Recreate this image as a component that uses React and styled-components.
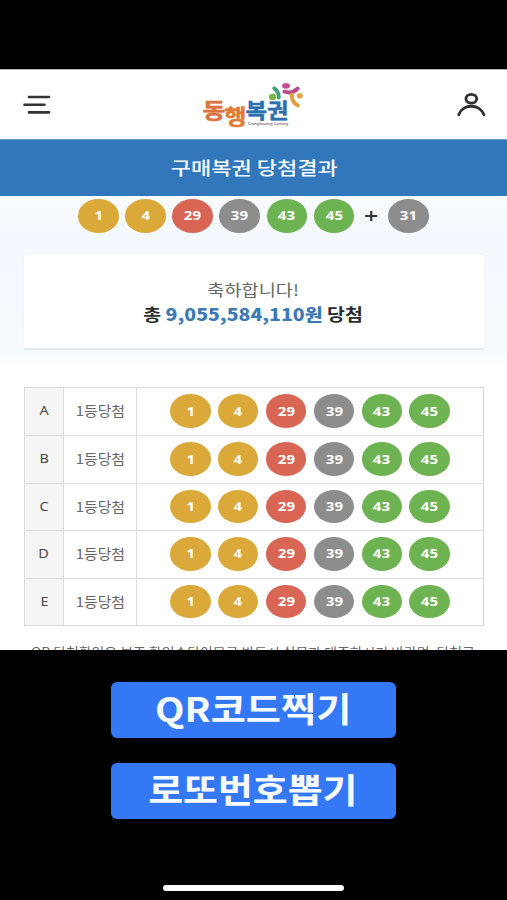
import styled, { createGlobalStyle } from 'styled-components';

const GlobalStyle = createGlobalStyle`
	* {
		box-sizing: border-box;
	}
	body {
		margin: 0;
		background: #000;
		font-family: 'Noto Sans CJK KR', 'Noto Sans', sans-serif;
	}
`;

const colors = {
	yellow: '#daa93a',
	red: '#d96555',
	gray: '#8d8d8e',
	green: '#6eb351',
};

const Screen = styled.div`
	display: flex;
	flex-direction: column;
	width: 507px;
	height: 900px;
	padding-top: 69px;
	overflow: hidden;
	background: #000;
`;

const WebPage = styled.main`
	display: flex;
	flex-direction: column;
	height: 581px;
	overflow: hidden;
	background: #fff;
`;

const Header = styled.header`
	display: flex;
	flex: none;
	justify-content: space-between;
	height: 70px;
	border-top: 1px solid #b5b5b5;
`;

/* wide lettering used everywhere on the page */
const Wide = styled.span`
	display: inline-block;
	white-space: pre;
	transform: scaleX(${(p) => p.$x || 1.2});
	transform-origin: ${(p) => p.$origin || 'center'};
`;

const TitleBar = styled.h1`
	display: flex;
	flex: none;
	align-items: center;
	justify-content: center;
	height: 57px;
	margin: 0;
	padding: 0 0 2px 1px;
	border-top: 1px solid #7399bd;
	background: #3277bc;
	color: #f4faff;
	font-size: 18.5px;
	font-weight: 500;
	line-height: 1;
`;

const Result = styled.section`
	display: flex;
	flex: none;
	flex-direction: column;
	align-items: center;
	height: 170px;
	padding-top: 3px;
	background: linear-gradient(#f8fbff, #f4f9ff 40px, #f6faff 155px, #fff);
`;

const Balls = styled.div`
	display: flex;
	align-items: center;
	justify-content: center;
	gap: ${(p) => p.$gap}px;
`;

const Circle = styled.span`
	display: flex;
	flex: none;
	align-items: center;
	justify-content: center;
	width: 40.6px;
	height: 33.6px;
	border-radius: 50%;
	background: ${(p) => colors[p.$color]};
	color: #fff;
	font-family: 'Noto Sans', sans-serif;
	font-size: 13px;
	font-weight: 700;
	line-height: 1;
`;

const Plus = styled.svg`
	flex: none;
	width: 21px;
	height: 14px;
`;

const WinCard = styled.div`
	display: flex;
	flex-direction: column;
	align-items: center;
	width: 460px;
	height: 95px;
	margin-top: 22px;
	padding-top: 23px;
	border-bottom: 2px solid #e6eaef;
	background: #fff;
	box-shadow: 0 0 3px #edf2f8;
`;

const Congrats = styled.p`
	margin: 0;
	color: #666;
	font-size: 15.5px;
	font-weight: 400;
	line-height: 22px;
`;

const Amount = styled.p`
	margin: 3px 0 0;
	color: #2c2c2e;
	font-size: 16.5px;
	font-weight: 700;
	line-height: 23px;

	b {
		color: #3d79b3;
	}
`;

const Table = styled.div`
	display: grid;
	flex: none;
	grid-template-rows: repeat(5, 1fr);
	width: 460px;
	height: 239px;
	margin: 21px 0 0 24px;
	border: 1px solid #d9d9d9;
`;

const Row = styled.div`
	display: grid;
	grid-template-columns: 38px 73px 1fr;

	& + & {
		border-top: 1px solid #dcdcdc;
	}
`;

const Cell = styled.div`
	display: flex;
	align-items: center;
	justify-content: center;
	padding-bottom: ${(p) => (p.$head ? 0 : 1)}px;
	background: ${(p) => (p.$head ? '#f5f5f5' : '#fff')};
	color: ${(p) => (p.$head ? '#484848' : '#666')};
	font-family: ${(p) => (p.$head ? "'Noto Sans', sans-serif" : 'inherit')};
	font-size: ${(p) => (p.$head ? 12.5 : 13.5)}px;
	line-height: 1;

	& + & {
		border-left: 1px solid #dcdcdc;
	}
`;

const Notice = styled.p`
	flex: none;
	margin: 16px 0 0 31px;
	color: #666;
	font-size: 13px;
	line-height: 20px;
`;

const Actions = styled.div`
	display: flex;
	flex-direction: column;
	align-items: center;
	gap: 25px;
	padding-top: 32px;
`;

const ActionButton = styled.button`
	display: flex;
	align-items: center;
	justify-content: center;
	width: 285px;
	height: 56px;
	padding: 0 1px 4px 0;
	border: 0;
	border-radius: 6px;
	background: #3478f6;
	color: #f5fbff;
	font-family: inherit;
	font-size: 34px;
	font-weight: 700;
	line-height: 1;
`;

const HomeBar = styled.div`
	flex: none;
	width: 181px;
	height: 6px;
	margin: 66px auto 0;
	border-radius: 3px;
	background: #fff;
`;

const numbers = [
	[1, 'yellow'],
	[4, 'yellow'],
	[29, 'red'],
	[39, 'gray'],
	[43, 'green'],
	[45, 'green'],
];

function Ball({ value, color }) {
	return (
		<Circle $color={color}>
			<Wide $x={1.16}>{value}</Wide>
		</Circle>
	);
}

function MenuIcon() {
	return (
		<svg width='80' height='69' viewBox='0 0 80 69' fill='none' stroke='#333' strokeWidth='2.6' strokeLinecap='round'>
			<path d='M29 27H49M24.5 34.7H44.5M29 42.4H49' />
		</svg>
	);
}

function UserIcon() {
	return (
		<svg width='80' height='69' viewBox='427 70 80 69' fill='none' stroke='#303030' strokeWidth='2.8' strokeLinecap='round'>
			<ellipse cx='471.3' cy='98.8' rx='5.4' ry='4.4' />
			<path d='M458.7 114.8C462.5 103.4 480 103.4 484 114.8' />
		</svg>
	);
}

function Logo() {
	return (
		<svg width='130' height='69' viewBox='190 70 130 69'>
			<g fontFamily='Noto Sans CJK KR, sans-serif' fontWeight='700' fontSize='21' strokeWidth='0.5'>
				<text x='203.5' y='118' fill='#dc7440' stroke='#dc7440' textLength='23' lengthAdjust='spacingAndGlyphs'>동</text>
				<text x='225.5' y='124' fill='#df7c32' stroke='#df7c32' textLength='22' lengthAdjust='spacingAndGlyphs'>행</text>
				<text x='246.5' y='118' fill='#2d70ad' stroke='#2d70ad' textLength='43' lengthAdjust='spacingAndGlyphs'>복권</text>
			</g>
			<text
				x='249'
				y='124.8'
				fill='#4a4a4a'
				fontFamily='Liberation Sans, sans-serif'
				fontSize='4.4'
				textLength='40.5'
				lengthAdjust='spacingAndGlyphs'
			>
				Donghaeng Lottery
			</text>
			<g fill='none' strokeLinecap='round'>
				<path d='M275.2 88.3Q280 91.5 279.8 97.5' stroke='#3f9f7c' strokeWidth='3.8' />
				<path d='M285.3 91.6Q292.5 94.5 298.8 88.5' stroke='#b94a8c' strokeWidth='3.8' />
				<path d='M292.8 94.5Q292.5 102.5 299 105.5' stroke='#e49c40' strokeWidth='3.8' />
			</g>
			<ellipse cx='273.5' cy='97' rx='3.6' ry='3.2' fill='#7ab648' />
			<ellipse cx='287' cy='85.8' rx='4' ry='2.9' fill='#c65092' />
			<ellipse cx='300.8' cy='95.8' rx='3' ry='2.8' fill='#eaa347' />
		</svg>
	);
}

export default function App() {
	return (
		<Screen>
			<GlobalStyle />
			<WebPage>
				<Header>
					<MenuIcon />
					<Logo />
					<UserIcon />
				</Header>
				<TitleBar>
					<Wide $x={1.19}>구매복권 당첨결과</Wide>
				</TitleBar>
				<Result>
					<Balls $gap={6.5}>
						{numbers.map(([value, color]) => (
							<Ball key={value} value={value} color={color} />
						))}
						<Plus viewBox='0 0 21 14' stroke='#333' strokeWidth='2.2'>
							<path d='M4.2 7H16.2M10.2 2V12' />
						</Plus>
						<Ball value={31} color='gray' />
					</Balls>
					<WinCard>
						<Congrats>
							<Wide $x={1.2}>축하합니다!</Wide>
						</Congrats>
						<Amount>
							<Wide $x={1.18}>
								총 <b>9,055,584,110원</b> 당첨
							</Wide>
						</Amount>
					</WinCard>
				</Result>
				<Table>
					{['A', 'B', 'C', 'D', 'E'].map((line) => (
						<Row key={line}>
							<Cell $head>
								<Wide $x={1.15}>{line}</Wide>
							</Cell>
							<Cell>
								<Wide $x={1.1}>1등당첨</Wide>
							</Cell>
							<Cell>
								<Balls $gap={7.3}>
									{numbers.map(([value, color]) => (
										<Ball key={value} value={value} color={color} />
									))}
								</Balls>
							</Cell>
						</Row>
					))}
				</Table>
				<Notice>
					<Wide $x={1.068} $origin='left'>
						QR 당첨확인은 보조 확인수단이므로 반드시 실물과 대조하시기 바라며, 당첨금
					</Wide>
				</Notice>
			</WebPage>
			<Actions>
				<ActionButton type='button'>
					<Wide $x={1.125}>QR코드찍기</Wide>
				</ActionButton>
				<ActionButton type='button'>
					<Wide $x={1.115}>로또번호뽑기</Wide>
				</ActionButton>
			</Actions>
			<HomeBar />
		</Screen>
	);
}
